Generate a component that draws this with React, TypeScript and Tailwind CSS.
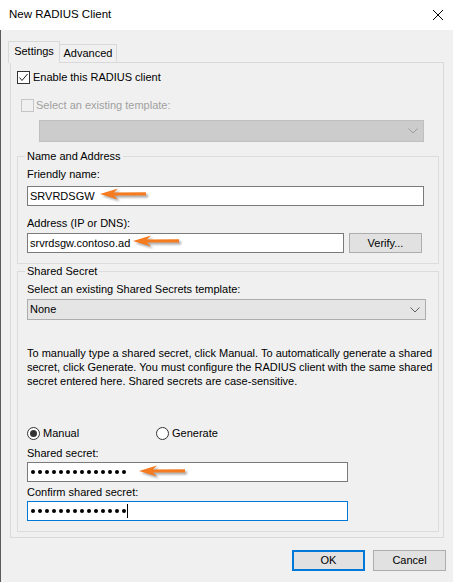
import type { ReactNode } from "react";

function Chevron({ color }: { color: string }) {
  return (
    <svg width="10" height="6" viewBox="0 0 10 6" fill="none">
      <path d="M0.5 0.5 L5 5 L9.5 0.5" stroke={color} strokeWidth="1" />
    </svg>
  );
}

function Arrow({ className }: { className: string }) {
  return (
    <svg
      width="48"
      height="14"
      viewBox="0 0 48 14"
      className={`absolute drop-shadow-[2px_2px_1px_rgba(0,0,0,0.35)] ${className}`}
    >
      <path d="M0 7 L18 1.5 L14 5.6 L46 5.2 L46 8.6 L14 8.4 L18 12.5 Z" fill="#f47b20" />
    </svg>
  );
}

function Group({ title, className, children }: { title: string; className: string; children: ReactNode }) {
  return (
    <div className={`relative ml-[6px] w-[422px] border border-[#dcdcdc] pl-[9px] ${className}`}>
      <span className="absolute -top-[7px] left-[7px] bg-[#f0f0f0] px-[2px] leading-[13px]">{title}</span>
      {children}
    </div>
  );
}

function Dots({ count }: { count: number }) {
  return (
    <div className="flex gap-[3px]">
      {Array.from({ length: count }).map((_, i) => (
        <span key={i} className="h-[4px] w-[4px] rounded-full bg-black" />
      ))}
    </div>
  );
}

function TextBox({ width, focused, children }: { width: string; focused?: boolean; children: ReactNode }) {
  return (
    <div
      className={`flex h-[20px] items-center border bg-white pl-[2px] leading-[13px] ${width} ${
        focused ? "border-[#0078d7]" : "border-[#7a7a7a]"
      }`}
    >
      {children}
    </div>
  );
}

export default function App() {
  return (
    <div className="relative h-[582px] w-[453px] overflow-hidden bg-[#f0f0f0] font-['Liberation_Sans',Arial,sans-serif] text-[11px] text-black">
      {/* title bar */}
      <div className="flex h-[30px] items-center justify-between bg-white pl-[9px] pr-[9px]">
        <span className="text-[11.5px]">New RADIUS Client</span>
        <svg width="12" height="12" viewBox="0 0 12 12">
          <path d="M1 1 L11 11 M11 1 L1 11" stroke="#000" strokeWidth="1" />
        </svg>
      </div>

      <div className="h-[552px] border-l border-[#5a5a5a]">
        {/* tabs */}
        <div className="flex h-[32px] items-end pl-[7px]">
          <div className="relative z-10 -mb-px flex h-[22px] w-[52px] items-start justify-center border border-b-0 border-[#d9d9d9] bg-[#f0f0f0] pt-[3px] leading-[13px]">
            Settings
          </div>
          <div className="flex h-[18px] w-[57px] items-center justify-center border border-b-0 border-l-0 border-[#d9d9d9] bg-[#f0f0f0] leading-[13px]">
            Advanced
          </div>
        </div>

        {/* panel */}
        <div className="ml-[9px] h-[476px] w-[434px] border border-[#d9d9d9]">
          <div className="ml-[6px] mt-[8px] flex h-[13px] items-center">
            <div className="flex h-[13px] w-[13px] items-center justify-center border border-[#333] bg-white">
              <svg width="11" height="11" viewBox="0 0 11 11" fill="none">
                <path d="M1.5 5.5 L4 8.5 L9.5 2" stroke="#222" strokeWidth="1" />
              </svg>
            </div>
            <span className="ml-[3px] leading-[13px]">Enable this RADIUS client</span>
          </div>

          <div className="ml-[10px] mt-[15px] flex h-[13px] items-center">
            <div className="h-[13px] w-[13px] border border-[#c6c6c6]" />
            <span className="ml-[2px] leading-[13px] text-[#a0a0a0]">Select an existing template:</span>
          </div>

          <div className="ml-[28px] mt-[8px] flex h-[22px] w-[385px] items-center justify-end border border-[#bfbfbf] bg-[#cccccc] pr-[5px]">
            <Chevron color="#9a9a9a" />
          </div>

          <Group title="Name and Address" className="mt-[14px] h-[108px]">
            <div className="mt-[11px] h-[13px] leading-[13px]">Friendly name:</div>
            <div className="mt-[5px]">
              <TextBox width="w-[397px]">SRVRDSGW</TextBox>
            </div>
            <div className="mt-[11px] h-[13px] leading-[13px]">Address (IP or DNS):</div>
            <div className="mt-[3px] flex gap-[5px]">
              <TextBox width="w-[317px]">srvrdsgw.contoso.ad</TextBox>
              <button className="h-[20px] w-[73px] border border-[#adadad] bg-[#e1e1e1] leading-[13px]">
                Verify...
              </button>
            </div>
          </Group>

          <Group title="Shared Secret" className="mt-[7px] h-[261px]">
            <div className="mt-[11px] h-[13px] leading-[13px]">Select an existing Shared Secrets template:</div>
            <div className="mt-[3px] flex h-[21px] w-[399px] items-center justify-between border border-[#adadad] bg-[#e5e5e5] pl-[2px] pr-[5px] leading-[13px]">
              <span>None</span>
              <Chevron color="#606060" />
            </div>
            <p className="mt-[26px] whitespace-nowrap leading-[14px]">
              To manually type a shared secret, click Manual. To automatically generate a shared
              <br />
              secret, click Generate. You must configure the RADIUS client with the same shared
              <br />
              secret entered here. Shared secrets are case-sensitive.
            </p>
            <div className="mt-[39px] flex h-[13px] items-center leading-[13px]">
              <div className="flex w-[129px] items-center">
                <div className="flex h-[13px] w-[13px] items-center justify-center rounded-full border border-[#333] bg-white">
                  <span className="h-[7px] w-[7px] rounded-full bg-[#333]" />
                </div>
                <span className="ml-[3px]">Manual</span>
              </div>
              <div className="h-[13px] w-[13px] rounded-full border border-[#333] bg-white" />
              <span className="ml-[3px]">Generate</span>
            </div>
            <div className="mt-[7px] h-[13px] leading-[13px]">Shared secret:</div>
            <div className="mt-[2px]">
              <TextBox width="w-[321px]">
                <div className="pl-[1px]">
                  <Dots count={14} />
                </div>
              </TextBox>
            </div>
            <div className="mt-[4px] h-[13px] leading-[13px]">Confirm shared secret:</div>
            <div className="mt-[2px]">
              <TextBox width="w-[321px]" focused>
                <div className="flex items-center pl-[1px]">
                  <Dots count={14} />
                  <span className="ml-[1px] h-[14px] w-px bg-black" />
                </div>
              </TextBox>
            </div>
          </Group>
        </div>

        {/* buttons */}
        <div className="mt-[12px] flex justify-end gap-[8px] pr-[7px]">
          <button className="h-[21px] w-[73px] border-2 border-[#0078d7] bg-[#e1e1e1] leading-[13px]">OK</button>
          <button className="h-[21px] w-[73px] border border-[#adadad] bg-[#e1e1e1] leading-[13px]">Cancel</button>
        </div>
      </div>

      <Arrow className="left-[100px] top-[187px]" />
      <Arrow className="left-[133px] top-[234px]" />
      <Arrow className="left-[139px] top-[464px]" />
    </div>
  );
}
